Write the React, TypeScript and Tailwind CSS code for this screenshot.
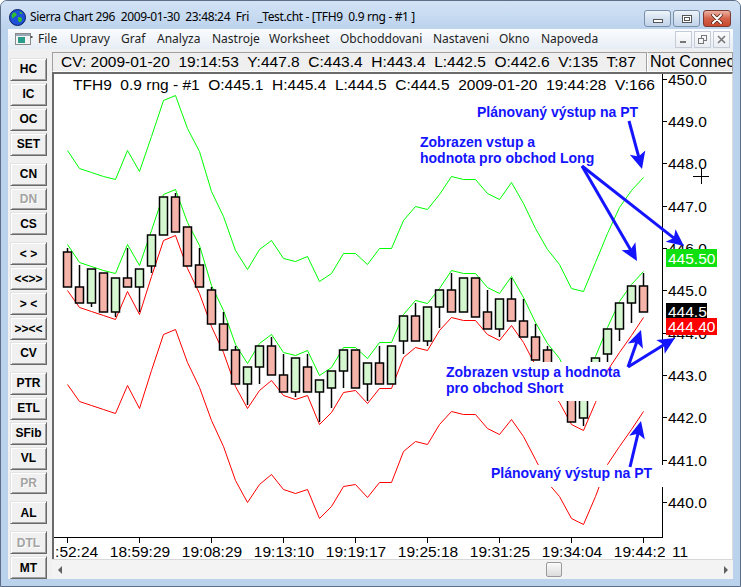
import React from 'react';

type Candle = [string, number, number, number, number];

// body top, body bottom, wick top, wick bottom (pixel rows of the page)
const candles: Candle[] = [
  ['r', 252, 287, 248, 287], ['r', 287, 303, 265, 303], ['g', 269, 303, 269, 307], ['r', 273, 312, 273, 312],
  ['g', 278, 312, 278, 317], ['r', 278, 287, 248, 287], ['g', 269, 287, 269, 312], ['g', 235, 266, 235, 273],
  ['g', 197, 235, 197, 235], ['r', 197, 232, 193, 232], ['r', 227, 266, 227, 266], ['r', 265, 287, 248, 287],
  ['r', 290, 324, 287, 324], ['r', 324, 350, 312, 350], ['r', 350, 384, 346, 384], ['g', 367, 384, 367, 405],
  ['g', 346, 367, 346, 384], ['r', 346, 375, 337, 375], ['r', 375, 392, 354, 392], ['g', 358, 392, 358, 397],
  ['r', 367, 392, 354, 392], ['g', 380, 392, 380, 422], ['g', 371, 388, 371, 408], ['g', 350, 371, 350, 388],
  ['r', 350, 388, 350, 388], ['g', 363, 384, 363, 401], ['r', 363, 384, 346, 384], ['g', 346, 384, 346, 384],
  ['g', 316, 341, 316, 354], ['r', 316, 341, 303, 341], ['g', 307, 341, 307, 346], ['g', 290, 307, 290, 328],
  ['r', 290, 312, 273, 312], ['g', 278, 312, 278, 312], ['r', 278, 317, 278, 317], ['r', 312, 329, 290, 329],
  ['g', 299, 329, 299, 337], ['r', 299, 321, 278, 321], ['r', 321, 337, 299, 337], ['r', 337, 360, 324, 360],
  ['r', 350, 385, 346, 385], ['r', 372, 398, 365, 398], ['r', 390, 422, 380, 422], ['g', 392, 418, 392, 426],
  ['g', 358, 392, 358, 398], ['g', 329, 354, 329, 362], ['g', 303, 329, 303, 341], ['g', 286, 303, 286, 323],
  ['r', 286, 312, 273, 312],
];

const hiBand = [244, 262, 266, 270, 273, 244, 265, 230, 194, 189, 222, 245, 285, 310, 344, 363, 343, 334, 352, 355, 350, 375, 367, 347, 347, 358, 342, 342, 314, 300, 303, 288, 270, 273, 273, 287, 293, 276, 297, 322, 343, 358, 382, 385, 356, 327, 301, 284, 271];
const loBand = [290, 307, 311, 315, 319, 291, 314, 276, 240, 235, 268, 293, 326, 352, 386, 408, 390, 380, 395, 399, 395, 424, 412, 392, 390, 403, 388, 388, 357, 347, 350, 330, 317, 320, 320, 334, 340, 325, 342, 365, 388, 402, 424, 430, 402, 370, 352, 335, 317];

const barX = (i: number) => 67 + i * 12;
const pts = (ys: number[], shift: number) => ys.map((y, i) => `${barX(i) + 0.5},${y + shift + 0.5}`).join(' ');

const priceY = (p: number) => 121 + (449 - p) * 42.33;
const prices = [450, 449, 448, 447, 446, 445, 444, 443, 442, 441, 440];
const times = ['18:52:24', '18:59:29', '19:08:29', '19:13:10', '19:19:17', '19:25:18', '19:31:25', '19:34:04', '19:44:28'];

const BLUE = '#1414ff';

function Arrow({ x1, y1, x2, y2 }: { x1: number; y1: number; x2: number; y2: number }) {
  const dx = x2 - x1;
  const dy = y2 - y1;
  const len = Math.hypot(dx, dy);
  const ux = dx / len;
  const uy = dy / len;
  const bx = x2 - ux * 17;
  const by = y2 - uy * 17;
  const px = -uy;
  const py = ux;
  const head = [
    [x2, y2],
    [bx + px * 8, by + py * 8],
    [bx + ux * 4, by + uy * 4],
    [bx - px * 8, by - py * 8],
  ]
    .map((p) => p.join(','))
    .join(' ');
  return (
    <g>
      <line x1={x1} y1={y1} x2={bx + ux * 5} y2={by + uy * 5} stroke={BLUE} strokeWidth={3} />
      <polygon points={head} fill={BLUE} />
    </g>
  );
}

function Chart() {
  return (
    <svg width={678} height={485} viewBox="54 74 678 485" className="block font-['Liberation_Sans',Arial,sans-serif] text-[15.5px]">
      <defs>
        <clipPath id="timeclip">
          <rect x={56} y={538} width={609} height={24} />
        </clipPath>
      </defs>

      <polyline points={pts(hiBand, -94)} fill="none" stroke="#00ff00" strokeWidth={1} />
      <polyline points={pts(hiBand, 0)} fill="none" stroke="#00ff00" strokeWidth={1} />
      <polyline points={pts(loBand, 0)} fill="none" stroke="#ff0000" strokeWidth={1} />
      <polyline points={pts(loBand, 94)} fill="none" stroke="#ff0000" strokeWidth={1} />

      {candles.map(([c, top, bot, hi, lo], i) => (
        <g key={i}>
          <line x1={barX(i) + 0.5} y1={hi} x2={barX(i) + 0.5} y2={lo} stroke="#000" strokeWidth={1.5} />
          <rect x={barX(i) - 3.5} y={top} width={8} height={bot - top} fill={c === 'g' ? '#d5f7cf' : '#f6b3a9'} stroke="#000" strokeWidth={1.5} />
        </g>
      ))}

      <line x1={662.5} y1={74} x2={662.5} y2={538} stroke="#000" strokeWidth={1} />
      <line x1={53} y1={537.5} x2={663} y2={537.5} stroke="#000" strokeWidth={1} />

      {prices.map((p) => {
        const y = Math.round(priceY(p));
        return (
          <g key={p}>
            <line x1={662} y1={y + 0.5} x2={667} y2={y + 0.5} stroke="#000" strokeWidth={1} />
            <text x={668} y={y + 6} fill="#000">{p.toFixed(1)}</text>
          </g>
        );
      })}

      {times.map((t, i) => (
        <line key={t} x1={barX(i * 6) + 0.5} y1={537} x2={barX(i * 6) + 0.5} y2={543} stroke="#000" strokeWidth={1} />
      ))}
      <g clipPath="url(#timeclip)">
        {times.map((t, i) => (
          <text key={t} x={barX(i * 6) + 1} y={556.5} textAnchor="middle" fill="#000">{t}</text>
        ))}
      </g>
      <text x={672} y={556.5} fill="#000">11</text>

      <text x={73} y={90} fill="#000" xmlSpace="preserve" style={{ whiteSpace: 'pre' }}>
        {'TFH9  0.9 rng - #1  O:445.1  H:445.4  L:444.5  C:444.5  2009-01-20  19:44:28  V:166'}
      </text>

      <g className="font-bold text-[14px]" fill={BLUE}>
        <text x={477} y={117}>Plánovaný výstup na PT</text>
        <text x={420} y={147}>Zobrazen vstup a</text>
        <text x={420} y={163}>hodnota pro obchod Long</text>
        <rect x={443} y={362} width={163} height={39} fill="#fff" />
        <text x={446} y={377}>Zobrazen vstup a hodnota</text>
        <text x={446} y={393}>pro obchod Short</text>
        <rect x={486} y={465} width={178} height={22} fill="#fff" />
        <text x={491} y={478}>Plánovaný výstup na PT</text>
      </g>

      <rect x={666} y={249} width={51} height={18} fill="#10e010" />
      <text x={668} y={264} fill="#fff">445.50</text>
      <rect x={666} y={303} width={41} height={15} fill="#000" />
      <text x={668} y={316.5} fill="#fff">444.5</text>
      <rect x={666} y={318} width={51} height={17} fill="#ff0000" />
      <text x={668} y={332} fill="#fff">444.40</text>

      <line x1={693} y1={176.5} x2={709} y2={176.5} stroke="#000" strokeWidth={1} />
      <line x1={701.5} y1={168} x2={701.5} y2={184} stroke="#000" strokeWidth={1} />

      <Arrow x1={629} y1={121} x2={642} y2={169} />
      <Arrow x1={582} y1={166} x2={637} y2={261} />
      <Arrow x1={582} y1={166} x2={684} y2={246} />
      <Arrow x1={628} y1={367} x2={641} y2={330} />
      <Arrow x1={628} y1={367} x2={675} y2={338} />
      <Arrow x1={630} y1={467} x2={641} y2={421} />
    </svg>
  );
}

function Globe() {
  return (
    <svg width={17} height={17} viewBox="0 0 17 17">
      <circle cx={8.5} cy={8.5} r={8} fill="#1d4fd8" stroke="#0b1f60" strokeWidth={1} />
      <path d="M4 4 C6 3 8 4 7.5 6 C7 8 5 7 4.5 9 C4 10 3 9 2.5 7 C2.5 6 3 5 4 4 Z" fill="#2fbf2f" />
      <path d="M9.5 8 C11.5 7.5 13.5 8.5 13 11 C12.5 13 10.5 14 9.5 12.5 C9 11 8.5 9 9.5 8 Z" fill="#2fbf2f" />
      <path d="M10 2.5 C11.5 2.5 13 3.5 13.5 5 C12 5 10.5 4.5 10 2.5 Z" fill="#2fbf2f" />
    </svg>
  );
}

function CaptionButton({ kind }: { kind: 'min' | 'max' | 'close' }) {
  if (kind === 'close') {
    return (
      <div className="flex h-[17px] w-[28px] items-center justify-center rounded-[3px] border border-[#7a3a30] bg-gradient-to-b from-[#eab1a4] via-[#d4624a] to-[#c84a2f]">
        <svg width={12} height={10} viewBox="0 0 12 10">
          <path d="M2 1 L10 9 M10 1 L2 9" stroke="#4a2018" strokeWidth={3.4} strokeLinecap="round" />
          <path d="M2 1 L10 9 M10 1 L2 9" stroke="#fff" strokeWidth={2} strokeLinecap="round" />
        </svg>
      </div>
    );
  }
  return (
    <div className="flex h-[17px] w-[27px] items-center justify-center rounded-[3px] border border-[#7b8ea8] bg-gradient-to-b from-[#eef4fb] via-[#d4e1f0] to-[#c2d4ea]">
      {kind === 'min' ? (
        <div className="mt-[5px] h-[4px] w-[10px] border border-[#555] bg-white" />
      ) : (
        <div className="h-[8px] w-[10px] border border-[#555] bg-white p-[1px]">
          <div className="h-full w-full border border-[#555]" />
        </div>
      )}
    </div>
  );
}

function MdiButton({ kind }: { kind: 'min' | 'restore' | 'close' }) {
  return (
    <div className="flex h-[17px] w-[17px] items-center justify-center border border-[#c5ccd6] bg-gradient-to-b from-[#fbfcfd] to-[#e9edf2]">
      <svg width={9} height={9} viewBox="0 0 9 9">
        {kind === 'min' && <rect x={1} y={6} width={6} height={2} fill="#777" />}
        {kind === 'restore' && (
          <g fill="none" stroke="#777" strokeWidth={1}>
            <rect x={3.5} y={0.5} width={5} height={5} />
            <rect x={0.5} y={3.5} width={5} height={5} fill="#f4f6f8" />
          </g>
        )}
        {kind === 'close' && <path d="M1 1 L8 8 M8 1 L1 8" stroke="#777" strokeWidth={1.6} />}
      </svg>
    </div>
  );
}

const menus: [string, string][] = [
  ['File', 'w-[32px]'],
  ['Upravy', 'w-[51px]'],
  ['Graf', 'w-[36px]'],
  ['Analyza', 'w-[55px]'],
  ['Nastroje', 'w-[57px]'],
  ['Worksheet', 'w-[71px]'],
  ['Obchoddovani', 'w-[93px]'],
  ['Nastaveni', 'w-[66px]'],
  ['Okno', 'w-[42px]'],
  ['Napoveda', 'w-[60px]'],
];

const tools: [string, boolean, boolean][] = [
  ['HC', false, false], ['IC', false, false], ['OC', false, false], ['SET', false, false],
  ['CN', true, false], ['DN', false, true], ['CS', false, false],
  ['< >', true, false], ['<<>>', false, false], ['> <', false, false], ['>><<', false, false], ['CV', false, false],
  ['PTR', true, false], ['ETL', false, false], ['SFib', false, false], ['VL', false, false], ['PR', false, true],
  ['AL', true, false],
  ['DTL', true, true], ['MT', false, false],
];

export default function App() {
  return (
    <div className="flex h-[587px] w-[741px] flex-col overflow-hidden rounded-t-[7px] border border-[#5d6f88] bg-[#bad2ec] font-['Noto_Sans',sans-serif] text-black">
      {/* title bar */}
      <div className="flex h-[28px] shrink-0 items-start bg-gradient-to-b from-[#d3e3f5] to-[#bcd3ed] pl-[8px] pr-[9px] pt-[8px]">
        <Globe />
        <span className="ml-[4px] mt-[-1px] whitespace-pre text-[12px] leading-[17px] tracking-[-0.35px]">
          {'Sierra Chart 296  2009-01-30  23:48:24  Fri   _Test.cht - [TFH9  0.9 rng - #1 ]'}
        </span>
        <div className="ml-auto flex gap-[2px] pt-[1px]">
          <CaptionButton kind="min" />
          <CaptionButton kind="max" />
          <div className="ml-[1px]">
            <CaptionButton kind="close" />
          </div>
        </div>
      </div>

      <div className="mx-[7px] flex flex-1 flex-col">
        {/* menu bar */}
        <div className="flex h-[20px] shrink-0 items-center bg-gradient-to-b from-[#fafcfe] to-[#e7edf5] pl-[7px] pr-[3px]">
          <svg width={18} height={13} viewBox="0 0 18 13" className="mr-[5px]">
            <rect x={0.5} y={0.5} width={15} height={11} fill="#f4f4f4" stroke="#8a8a8a" />
            <rect x={1} y={1} width={14} height={2} fill="#9aa7b8" />
            <rect x={3} y={4} width={7} height={6} fill="#2a9d8a" />
            <rect x={15.5} y={3} width={2} height={2} fill="#555" />
          </svg>
          {menus.map(([m, w]) => (
            <span key={m} className={`${w} shrink-0 text-[12px] leading-[16px] text-[#1e1e1e]`}>
              {m}
            </span>
          ))}
          <div className="ml-auto flex gap-[2px]">
            <MdiButton kind="min" />
            <MdiButton kind="restore" />
            <MdiButton kind="close" />
          </div>
        </div>

        {/* main area */}
        <div className="flex h-[530px] bg-[#f0f0f0]">
          {/* left toolbar */}
          <div className="flex w-[44px] shrink-0 flex-col pl-[2px] pt-[7px] font-['Liberation_Sans',Arial,sans-serif]">
            {tools.map(([t, gap, disabled]) => (
              <div
                key={t}
                className={`${gap ? 'mt-[7px]' : 'mt-[2px]'} flex h-[23px] w-[37px] items-center justify-center border border-b-[#696969] border-l-[#e3e3e3] border-r-[#696969] border-t-[#e3e3e3] bg-[#f0f0f0] text-[12px] font-bold leading-none shadow-[inset_1px_1px_0_#ffffff,inset_-1px_-1px_0_#a0a0a0] ${
                  disabled ? 'text-[#a3a3a3] [text-shadow:1px_1px_0_#ffffff]' : 'text-black'
                }`}
              >
                {t}
              </div>
            ))}
          </div>

          {/* chart panel */}
          <div className="flex min-w-0 flex-1 flex-col font-['Liberation_Sans',Arial,sans-serif]">
            <div className="mt-[3px] flex h-[20px] shrink-0 text-[15.5px] leading-[18px]">
              <div className="w-[595px] shrink-0 overflow-hidden whitespace-pre border border-b-white border-l-[#a0a0a0] border-r-[#a0a0a0] border-t-[#a0a0a0] bg-[#efefef] pl-[8px]">
                {'CV: 2009-01-20  19:14:53  Y:447.8  C:443.4  H:443.4  L:442.5  O:442.6  V:135  T:87'}
              </div>
              <div className="min-w-0 flex-1 overflow-hidden whitespace-nowrap border border-b-white border-l-white border-r-[#a0a0a0] border-t-[#a0a0a0] bg-[#efefef] pl-[2px] text-[16px]">
                Not Connected
              </div>
            </div>
            <div className="h-[487px] shrink-0 overflow-hidden border-l-2 border-r border-t-2 border-l-[#6b6b6b] border-r-[#dcdcdc] border-t-[#6b6b6b] bg-white">
              <Chart />
            </div>
            <div className="flex h-[20px] shrink-0 items-center border-t border-[#d8d8d8] bg-[#f3f3f3]">
              <div className="flex w-[16px] justify-center">
                <svg width={5} height={8} viewBox="0 0 5 8">
                  <path d="M4 0 L0 4 L4 8 Z" fill="#606060" />
                </svg>
              </div>
              <div className="flex flex-1 items-center">
                <div className="ml-[478px] h-[15px] w-[16px] rounded-[2px] border border-[#9a9a9a] bg-gradient-to-b from-[#fafafa] to-[#dcdcdc]" />
              </div>
              <div className="flex w-[16px] justify-center">
                <svg width={5} height={8} viewBox="0 0 5 8">
                  <path d="M1 0 L5 4 L1 8 Z" fill="#606060" />
                </svg>
              </div>
            </div>
          </div>
        </div>
      </div>
      <div className="h-[7px] shrink-0" />
    </div>
  );
}
